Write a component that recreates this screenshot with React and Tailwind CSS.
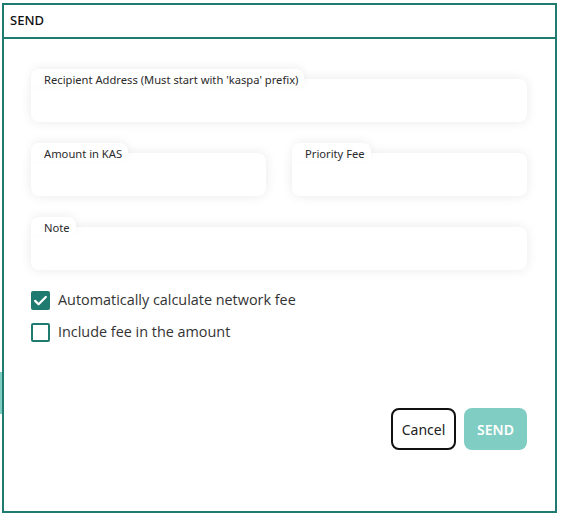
const Field = ({ label, className = "" }) => {
  return (
    <div className={`relative pt-[10px] ${className}`}>
      <span className="absolute left-0 top-0 rounded-t-lg bg-white pl-[13px] pr-[6px] pt-[4px] text-[11.2px] leading-[14px] text-[#2a2a2a] shadow-[0_-3px_8px_rgba(0,0,0,0.05)]">
        {label}
      </span>
      <div className="h-[43px] rounded-lg bg-white shadow-[0_0_12px_rgba(0,0,0,0.09)]" />
    </div>
  );
};

const Check = ({ checked, label }) => {
  return (
    <label className="flex items-center gap-[8px]">
      {checked ? (
        <span className="flex h-[19px] w-[19px] items-center justify-center rounded-[2px] bg-[#1f7a70]">
          <svg viewBox="0 0 24 24" className="h-[17px] w-[17px]" fill="none" stroke="white" strokeWidth="3.2" strokeLinecap="round" strokeLinejoin="round">
            <path d="M4.5 12.5l4.8 4.8L19.5 7" />
          </svg>
        </span>
      ) : (
        <span className="h-[19px] w-[19px] rounded-[2px] border-2 border-[#1f7a70] bg-white" />
      )}
      <span className="text-[14.4px] leading-[20px] text-[#333]">{label}</span>
    </label>
  );
};

export default function App() {
  return (
    <div className="relative h-[515px] w-[561px] bg-white pl-[2px] pt-[3px] font-['Open_Sans',sans-serif]">
      {/* bits of the page behind the dialog */}
      <div className="absolute left-0 top-[372px] h-[42px] w-[2px] bg-[#7fcdc2]" />
      <div className="flex h-[510px] w-[555px] flex-col border-2 border-[#1f7a70] bg-white">
        {/* HEADER */}
        <div className="flex h-[34px] items-center border-b-2 border-[#1f7a70] pl-[6px]">
          <span className="font-['Noto_Sans',sans-serif] text-[13px] font-medium text-[#111]">SEND</span>
        </div>

        {/* BODY */}
        <div className="flex flex-1 flex-col pl-[27px] pr-[28px] pt-[30px] font-['Noto_Sans',sans-serif]">
          <Field label="Recipient Address (Must start with 'kaspa' prefix)" />

          <div className="mt-[21px] grid grid-cols-2 gap-[26px]">
            <Field label="Amount in KAS" />
            <Field label="Priority Fee" />
          </div>

          <Field label="Note" className="mt-[21px]" />

          <div className="mt-[20px] flex flex-col gap-[12px] font-['Open_Sans',sans-serif]">
            <Check checked label="Automatically calculate network fee" />
            <Check label="Include fee in the amount" />
          </div>

          {/* BUTTONS */}
          <div className="mt-[66px] flex justify-end gap-[8px]">
            <button className="h-[42px] w-[65px] rounded-lg border-2 border-[#111] bg-white text-[14px] text-[#222]">
              Cancel
            </button>
            <button className="h-[42px] w-[63px] rounded-lg bg-[#80cdc3] text-[14px] font-semibold text-white">
              SEND
            </button>
          </div>
        </div>
      </div>
    </div>
  );
}
